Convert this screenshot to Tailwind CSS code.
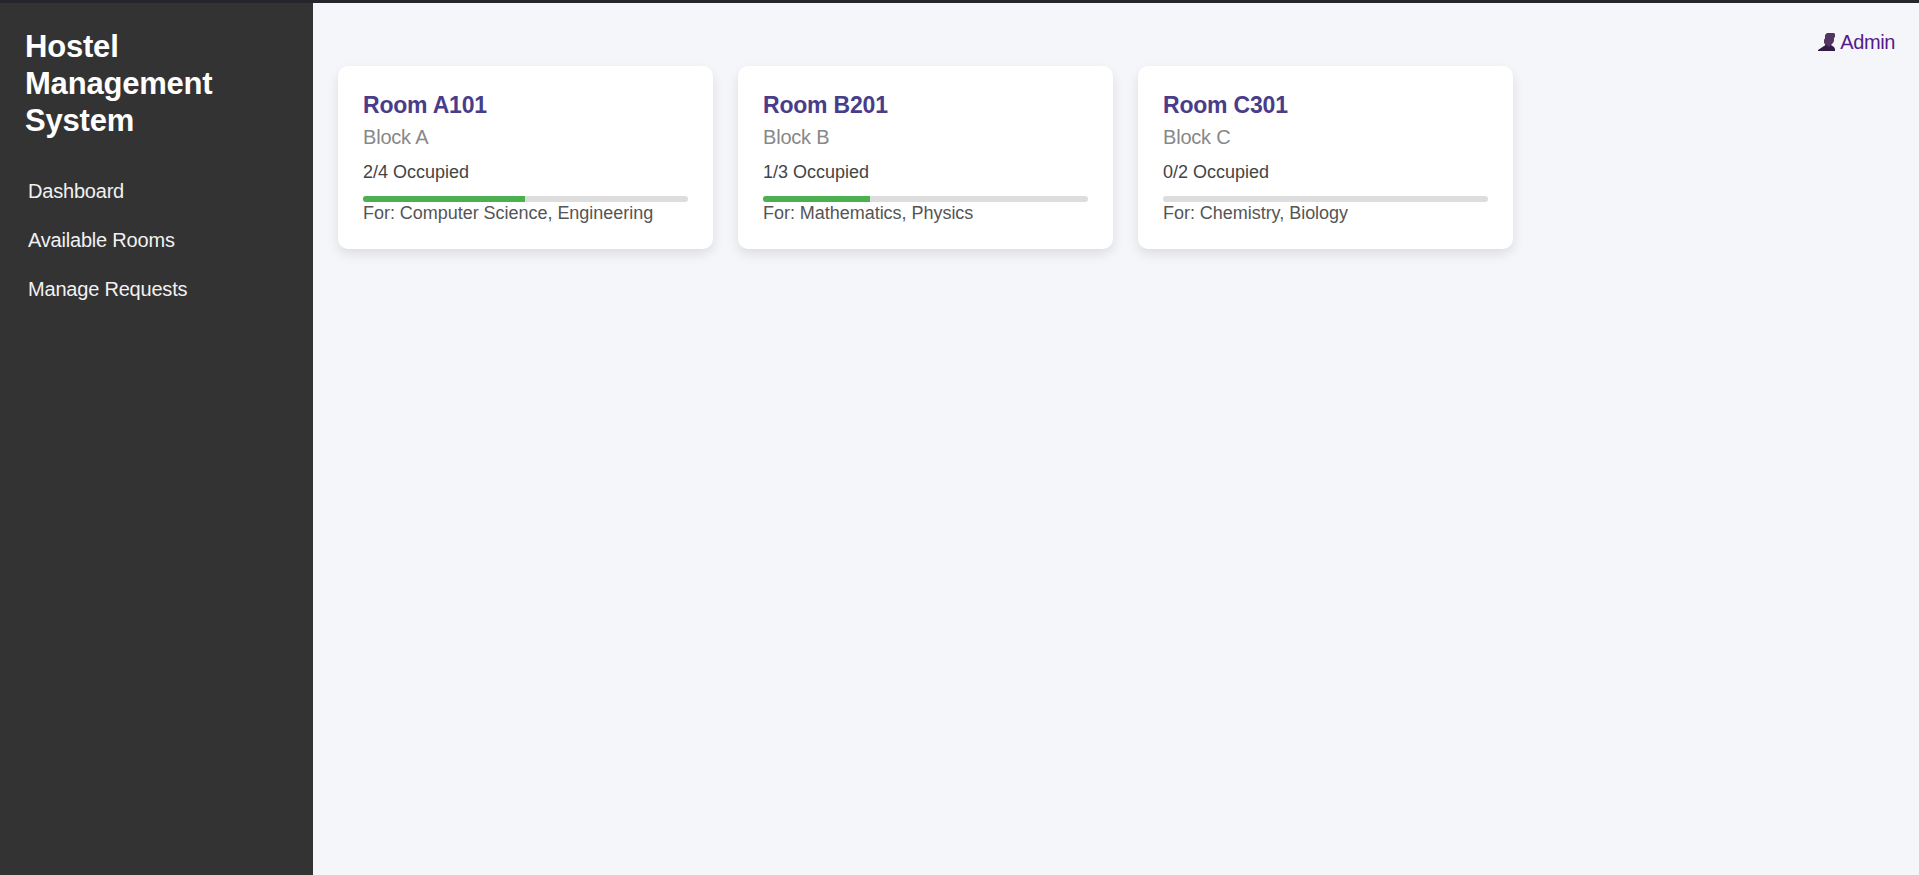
<!DOCTYPE html>
<html lang="en">
<head>
<meta charset="utf-8">
<title>Hostel Management System</title>
<script src="https://cdn.jsdelivr.net/npm/@tailwindcss/browser@4"></script>
</head>
<body class="bg-[#f4f6fa] font-['Liberation_Sans',Arial,sans-serif]">
<div class="flex h-screen border-t-3 border-[#26252b]">
  <aside class="w-[313px] shrink-0 bg-[#333] text-white pl-[25px] pr-5 pt-[25px]">
    <h2 class="text-[31px] leading-[37px] font-bold tracking-[-0.2px] mb-10">Hostel<br>Management<br>System</h2>
    <nav class="flex flex-col text-xl leading-6 gap-[25px] pl-[3px] tracking-[-0.2px] text-[#f1f1f1]">
      <a>Dashboard</a><a>Available Rooms</a><a>Manage Requests</a>
    </nav>
  </aside>
  <main class="grow pl-[25px] pr-6 pt-[25px]">
    <header class="flex h-[38px] justify-end text-xl leading-7 tracking-[-0.4px] text-[#551a8b]">
      <a class="flex items-center h-7 gap-1"><svg class="w-[18px] h-[18px]" viewBox="0 0 18 18"><path fill="#533561" d="M9 0H16L17 1V4L16 5V8L15 10L13 12V14H7V11L6 10V7L7 5V2Z"/><path fill="#321c45" d="M0 18V17L3 15L6 13L8 12L11 14L13 12L16 14L17 16V18Z"/></svg>Admin</a>
    </header>
    <section class="flex gap-[25px]">
      <article class="w-[375px] h-[183px] rounded-[10px] bg-white p-[25px] shadow-[0_5px_12px_rgba(0,0,0,0.1)]">
        <h3 class="text-[23px] leading-7 font-bold tracking-[-0.2px] text-[#483d8b]">Room A101</h3>
        <p class="mt-1.5 text-xl leading-6 tracking-[-0.2px] text-[#888]">Block A</p>
        <p class="mt-[13px] text-lg leading-5 text-[#444]">2/4 Occupied</p>
        <div class="mt-3.5 h-1.5 rounded-[3px] bg-[#ddd] overflow-hidden"><div class="h-full bg-[#4caf50]" style="width:49.85%"></div></div>
        <p class="mt-px text-lg leading-5 tracking-[-0.03px] text-[#555]">For: Computer Science, Engineering</p>
      </article>
      <article class="w-[375px] h-[183px] rounded-[10px] bg-white p-[25px] shadow-[0_5px_12px_rgba(0,0,0,0.1)]">
        <h3 class="text-[23px] leading-7 font-bold tracking-[-0.2px] text-[#483d8b]">Room B201</h3>
        <p class="mt-1.5 text-xl leading-6 tracking-[-0.2px] text-[#888]">Block B</p>
        <p class="mt-[13px] text-lg leading-5 text-[#444]">1/3 Occupied</p>
        <div class="mt-3.5 h-1.5 rounded-[3px] bg-[#ddd] overflow-hidden"><div class="h-full bg-[#4caf50]" style="width:33%"></div></div>
        <p class="mt-px text-lg leading-5 tracking-[-0.03px] text-[#555]">For: Mathematics, Physics</p>
      </article>
      <article class="w-[375px] h-[183px] rounded-[10px] bg-white p-[25px] shadow-[0_5px_12px_rgba(0,0,0,0.1)]">
        <h3 class="text-[23px] leading-7 font-bold tracking-[-0.2px] text-[#483d8b]">Room C301</h3>
        <p class="mt-1.5 text-xl leading-6 tracking-[-0.2px] text-[#888]">Block C</p>
        <p class="mt-[13px] text-lg leading-5 text-[#444]">0/2 Occupied</p>
        <div class="mt-3.5 h-1.5 rounded-[3px] bg-[#ddd] overflow-hidden"></div>
        <p class="mt-px text-lg leading-5 tracking-[-0.03px] text-[#555]">For: Chemistry, Biology</p>
      </article>
    </section>
  </main>
</div>
</body>
</html>
